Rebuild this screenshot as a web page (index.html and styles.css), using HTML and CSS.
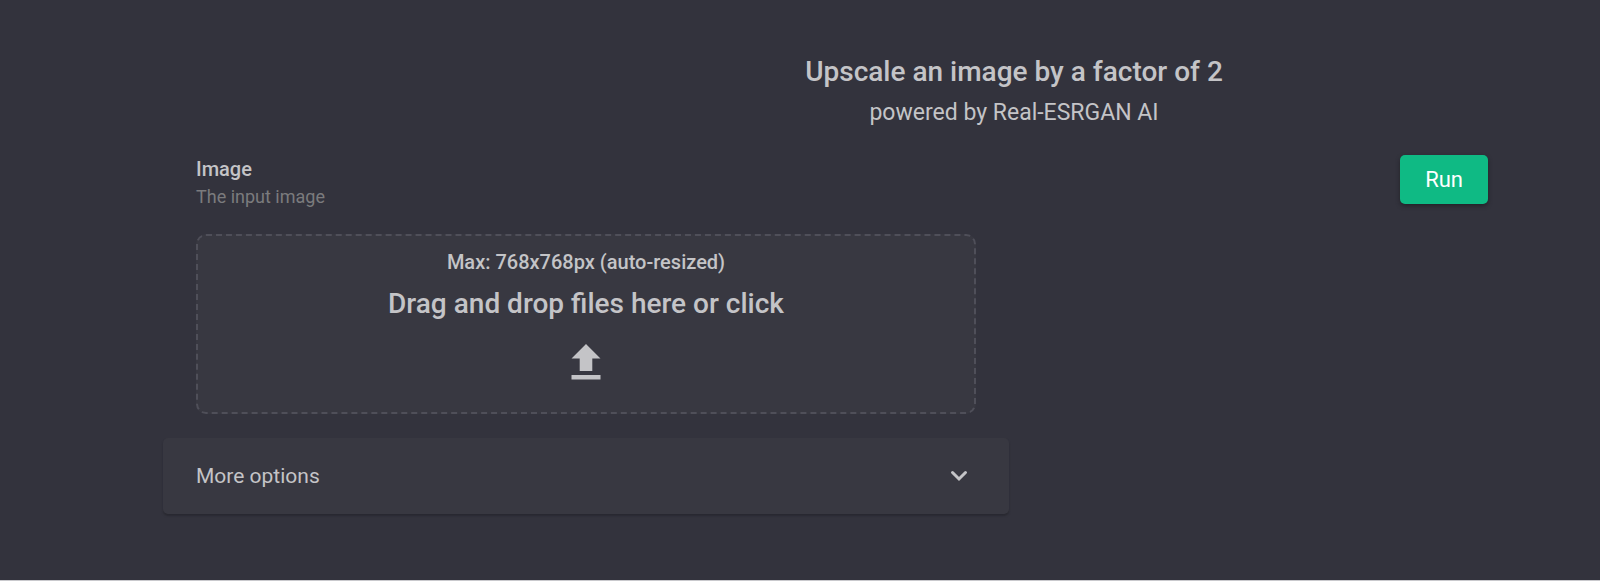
FILE: index.html
```html
<!DOCTYPE html>
<html lang="en">
<head>
<meta charset="utf-8">
<meta name="viewport" content="width=device-width, initial-scale=1">
<title>Upscale an image</title>
<link rel="stylesheet" href="styles.css">
</head>
<body>
<main class="page">
  <header class="intro">
    <h1 class="title">Upscale an image by a factor of 2</h1>
    <p class="subtitle">powered by Real-ESRGAN AI</p>
  </header>
  <form class="form">
    <div class="fields">
      <section class="field">
        <h2 class="label" id="image-label">Image</h2>
        <p class="hint">The input image</p>
        <button type="button" class="dropzone" aria-describedby="image-label">
          <span class="limit">Max: 768x768px (auto-resized)</span>
          <span class="prompt">Drag and drop files here or click</span>
          <svg class="upload" viewBox="0 0 30 36" aria-hidden="true"><path d="M15 0 29.500 14.500H21.300V27H8.700V14.500H.5ZM.5 31H29.500V35.500H.5Z"/></svg>
        </button>
      </section>
      <button type="button" class="more" aria-expanded="false">
        <span>More options</span>
        <svg class="chevron" viewBox="0 0 18 12" aria-hidden="true"><path d="M2.500 2.500 9 9 15.500 2.500"/></svg>
      </button>
    </div>
    <button type="button" class="run">Run</button>
  </form>
</main>
</body>
</html>
```
FILE: styles.css
```css
* { box-sizing: border-box; }
body {
  margin: 0;
  background: #33333d;
  color: #c4c4c7;
  font-family: Roboto, "Liberation Sans", sans-serif;
}
h1, h2, p { margin: 0; }
button { font: inherit; color: inherit; border: 0; cursor: pointer; }
.page {
  min-height: 100vh;
  padding: 52px 7% 0 163px;
  border-bottom: 1px solid #c9c9cd;
}
.intro {
  padding-left: 377px;
  text-align: center;
}
.title { font-size: 28px; line-height: 40px; font-weight: 500; }
.subtitle { margin-top: 5px; font-size: 23px; line-height: 32px; }
.form {
  display: flex;
  justify-content: space-between;
  align-items: flex-start;
  padding-top: 26px;
}
.fields { flex: 0 1 846px; }
.field { padding: 0 33px; }
.label { font-size: 20px; line-height: 28px; font-weight: 500; }
.hint { font-size: 18px; line-height: 28px; color: #7b7b7d; }
.dropzone {
  display: flex;
  flex-direction: column;
  align-items: center;
  width: 100%;
  margin-top: 23px;
  padding: 12px 16px 32px;
  border: 2px dashed #4f4f59;
  border-radius: 10px;
  background: #383841;
  font-weight: 500;
}
.limit { font-size: 20px; line-height: 28px; }
.prompt { margin-top: 8px; font-size: 28px; line-height: 40px; }
.upload { width: 30px; height: 36px; margin-top: 20px; fill: #c4c4c7; }
.more {
  display: flex;
  justify-content: space-between;
  align-items: center;
  width: 100%;
  height: 76px;
  margin-top: 24px;
  padding: 0 41px 0 33px;
  border-radius: 5px;
  background: #383841;
  box-shadow: 0 2px 2px #292931;
  font-size: 21px;
}
.chevron {
  width: 18px;
  height: 12px;
  fill: none;
  stroke: #c4c4c7;
  stroke-width: 3;
  stroke-linecap: round;
}
.run {
  padding: 8px 25px;
  border-radius: 5px;
  background: #0fba84;
  box-shadow: 0 2px 4px #222229;
  color: #fff;
  font-size: 22px;
  line-height: 33px;
}
```
